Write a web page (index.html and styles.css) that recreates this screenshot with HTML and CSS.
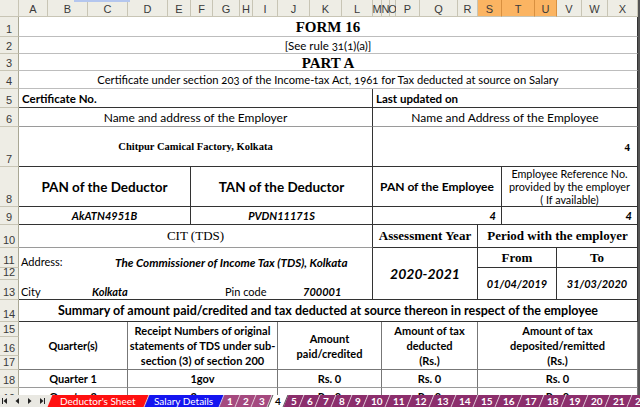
FILE: index.html
```html
<!DOCTYPE html>
<html lang="en">
<head>
    <meta charset="UTF-8">
    <title>Form 16 - Part A</title>
    <link rel="stylesheet" href="styles.css">
</head>
<body>
    <div class="sheet">
        <!-- column headers -->
        <div class="ch corner"></div>
        <div class="ch">A</div><div class="ch">B</div><div class="ch">C</div><div class="ch">D</div>
        <div class="ch">E</div><div class="ch">F</div><div class="ch">G</div><div class="ch">H</div>
        <div class="ch">I</div><div class="ch">J</div><div class="ch">K</div><div class="ch">L</div>
        <div class="ch">M</div><div class="ch">N</div><div class="ch">O</div><div class="ch">P</div>
        <div class="ch">Q</div><div class="ch">R</div><div class="ch sel">S</div><div class="ch sel">T</div>
        <div class="ch sel">U</div><div class="ch">V</div><div class="ch">W</div><div class="ch">X</div>

        <!-- row headers -->
        <div class="rh">1</div><div class="rh">2</div><div class="rh">3</div><div class="rh">4</div>
        <div class="rh">5</div><div class="rh">6</div><div class="rh">7</div><div class="rh">8</div>
        <div class="rh">9</div><div class="rh">10</div><div class="rh">11</div><div class="rh">12</div>
        <div class="rh">13</div><div class="rh">14</div><div class="rh">15</div><div class="rh">16</div>
        <div class="rh">17</div><div class="rh">18</div><div class="rh">19</div>

        <!-- title block -->
        <div class="cell light full r1 serif title">FORM 16</div>
        <div class="cell light full r2 rule">[See rule 31(1)(a)]</div>
        <div class="cell light full r3 serif title">PART A</div>
        <div class="cell light full r4 cert">Certificate under section 203 of the Income-tax Act, 1961 for Tax deducted at source on Salary</div>

        <div class="cell left-half r5 left label">Certificate No.</div>
        <div class="cell right-half r5 left label">Last updated on</div>

        <div class="cell light-b left-half r6 head">Name and address of the Employer</div>
        <div class="cell light-b right-half r6 head">Name and Address of the Employee</div>

        <div class="cell left-half r7 serif employer">Chitpur Camical Factory, Kolkata</div>
        <div class="cell right-half r7 serif num-right">4</div>

        <div class="cell c-ae r8 big">PAN of the Deductor</div>
        <div class="cell c-fl r8 big">TAN of the Deductor</div>
        <div class="cell c-ms r8 mid">PAN of the Employee</div>
        <div class="cell c-tx r8 small">Employee Reference No.<br>provided by the employer<br>( If available)</div>

        <div class="cell c-ae r9 value">AkATN4951B</div>
        <div class="cell c-fl r9 value">PVDN11171S</div>
        <div class="cell c-ms r9 value end">4</div>
        <div class="cell c-tx r9 value end">4</div>

        <div class="cell light-b left-half r10 serif cit">CIT (TDS)</div>
        <div class="cell c-mr r10 serif sub">Assessment Year</div>
        <div class="cell c-sx r10 serif sub">Period with the employer</div>

        <div class="cell left-half r11-13 address">
            <div class="addr-line">
                <span class="addr-label">Address:</span>
                <span class="addr-value commissioner">The Commissioner of Income Tax (TDS), Kolkata</span>
            </div>
            <div class="addr-line second">
                <span class="city-label">City</span>
                <span class="city-value">Kolkata</span>
                <span class="pin-label">Pin code</span>
                <span class="addr-value">700001</span>
            </div>
        </div>
        <div class="cell c-mr r11-13 year">2020-2021</div>
        <div class="cell c-su r11 serif sub">From</div>
        <div class="cell c-vx r11 serif sub">To</div>
        <div class="cell c-su r12-13 date">01/04/2019</div>
        <div class="cell c-vx r12-13 date">31/03/2020</div>

        <div class="cell full r14 summary">Summary of amount paid/credited and tax deducted at source thereon in respect of the employee</div>

        <div class="cell q1 r15-17 th">Quarter(s)</div>
        <div class="cell q2 r15-17 th">Receipt Numbers of original<br>statements of TDS under sub-<br>section (3) of section 200</div>
        <div class="cell q3 r15-17 th">Amount<br>paid/credited</div>
        <div class="cell q4 r15-17 th">Amount of tax<br>deducted<br>(Rs.)</div>
        <div class="cell q5 r15-17 th">Amount of tax<br>deposited/remitted<br>(Rs.)</div>

        <div class="cell light-b q1 r18 td">Quarter 1</div>
        <div class="cell light-b q2 r18 td">1gov</div>
        <div class="cell light-b q3 r18 td">Rs. 0</div>
        <div class="cell light-b q4 r18 td">Rs. 0</div>
        <div class="cell light-b q5 r18 td">Rs. 0</div>

        <div class="cell light-b q1 r19 td">Quarter 2</div>
        <div class="cell light-b q2 r19 td">2gov</div>
        <div class="cell light-b q3 r19 td">Rs. 0</div>
        <div class="cell light-b q4 r19 td">Rs. 0</div>
        <div class="cell light-b q5 r19 td">Rs. 0</div>
    </div>

    <div class="tabbar">
        <div class="nav">
            <svg width="50" height="12" viewBox="0 0 50 12">
                <rect x="2" y="3" width="1" height="6" fill="#222"/>
                <path d="M7 3 L3.5 6 L7 9 Z" fill="#222"/>
                <path d="M19 3 L15.5 6 L19 9 Z" fill="#222"/>
                <path d="M28 3 L31.5 6 L28 9 Z" fill="#222"/>
                <path d="M40 3 L43.5 6 L40 9 Z" fill="#222"/>
                <rect x="44" y="3" width="1" height="6" fill="#222"/>
            </svg>
        </div>
        <div class="tab red"><span>Deductor's Sheet</span></div>
        <div class="tab blue"><span>Salary Details</span></div>
        <div class="tab pale"><span>1</span></div>
        <div class="tab pale"><span>2</span></div>
        <div class="tab pale"><span>3</span></div>
        <div class="tab active"><span>4</span></div>
        <div class="tab"><span>5</span></div>
        <div class="tab"><span>6</span></div>
        <div class="tab"><span>7</span></div>
        <div class="tab"><span>8</span></div>
        <div class="tab"><span>9</span></div>
        <div class="tab wide"><span>10</span></div>
        <div class="tab wide"><span>11</span></div>
        <div class="tab wide"><span>12</span></div>
        <div class="tab wide"><span>13</span></div>
        <div class="tab wide"><span>14</span></div>
        <div class="tab wide"><span>15</span></div>
        <div class="tab wide"><span>16</span></div>
        <div class="tab wide"><span>17</span></div>
        <div class="tab wide"><span>18</span></div>
        <div class="tab wide"><span>19</span></div>
        <div class="tab wide"><span>20</span></div>
        <div class="tab wide"><span>21</span></div>
        <div class="tab wide"><span>22</span></div>
    </div>
</body>
</html>
```

FILE: styles.css
```css
body {
    margin: 0;
    width: 640px;
    height: 407px;
    overflow: hidden;
    background-color: #fff;
    font-family: Lato, "Noto Sans", sans-serif;
    color: #000;
}

/* the worksheet: row header + columns A..X */
.sheet {
    position: relative;
    display: grid;
    grid-template-columns: 19px 29px 40px 40px 40px 23px 22px 27px 13px 25px 32px 32px 31px 9px 8px 6px 24px 38px 20px 24px 33px 22px 25px 26px 30px;
    grid-template-rows: 17px 20px 17px 17px 18px 19px 19px 40px 40px 18px 23px 20px 12px 20px 22px 15px 19px 14px 18px 18px;
    width: 638px;
    height: 395px;
    overflow: hidden;
    border-right: 2px solid #555;
}

/* bit of the formula bar selection peeking in at the top */
.sheet::before {
    content: "";
    position: absolute;
    left: 74px;
    top: 0;
    width: 56px;
    height: 2px;
    background-color: #b4c6ee;
}

.ch, .rh {
    background-color: #eeede5;
    border-right: 1px solid #c8c5b5;
    border-bottom: 1px solid #c8c5b5;
    font-family: "Liberation Sans", Arial, sans-serif;
    font-size: 11px;
    color: #3a3a3a;
    display: flex;
    justify-content: center;
    box-sizing: border-box;
}

.ch {
    align-items: center;
    padding-top: 2px;
}

.ch.sel {
    background-color: #fbb462;
    border-right-color: #d89040;
}

.rh {
    grid-column: 1;
    align-items: flex-end;
    padding-bottom: 1px;
    border-right-color: #a9a794;
}

.cell {
    display: flex;
    align-items: center;
    justify-content: center;
    text-align: center;
    white-space: nowrap;
    box-sizing: border-box;
    border-right: 1px solid #333;
    border-bottom: 1px solid #333;
}

.cell.light {
    border-bottom-color: #bdbdbd;
}

.cell.light-b {
    border-bottom-color: #9a9a9a;
}

/* columns */
.full { grid-column: 2 / 26; }
.left-half { grid-column: 2 / 14; }
.right-half { grid-column: 14 / 26; }
.c-ae { grid-column: 2 / 7; }
.c-fl { grid-column: 7 / 14; }
.c-ms { grid-column: 14 / 21; }
.c-tx { grid-column: 21 / 26; }
.c-mr { grid-column: 14 / 20; }
.c-sx { grid-column: 20 / 26; }
.c-su { grid-column: 20 / 23; }
.c-vx { grid-column: 23 / 26; }
.q1 { grid-column: 2 / 5; }
.q2 { grid-column: 5 / 11; }
.q3 { grid-column: 11 / 15; }
.q4 { grid-column: 15 / 20; }
.q5 { grid-column: 20 / 26; }

/* rows (sheet row n sits on grid row n + 1) */
.r1 { grid-row: 2; }
.r2 { grid-row: 3; }
.r3 { grid-row: 4; }
.r4 { grid-row: 5; }
.r5 { grid-row: 6; }
.r6 { grid-row: 7; }
.r7 { grid-row: 8; }
.r8 { grid-row: 9; }
.r9 { grid-row: 10; }
.r10 { grid-row: 11; }
.r11 { grid-row: 12; }
.r11-13 { grid-row: 12 / 15; }
.r12-13 { grid-row: 13 / 15; }
.r14 { grid-row: 15; }
.r15-17 { grid-row: 16 / 19; }
.r18 { grid-row: 19; }
.r19 { grid-row: 20; }

.serif {
    font-family: "Liberation Serif", "Times New Roman", serif;
}

.title {
    font-size: 15px;
    font-weight: bold;
    padding-top: 2px;
}

.rule {
    font-size: 11.5px;
    font-variant-numeric: oldstyle-nums;
}

.cert {
    font-size: 11.2px;
    font-variant-numeric: oldstyle-nums;
}

.left {
    justify-content: flex-start;
    padding-left: 3px;
}

.label {
    font-size: 11.5px;
    font-weight: bold;
}

.head {
    font-size: 12px;
}

.employer {
    font-size: 10.5px;
    font-weight: bold;
}

.num-right {
    justify-content: flex-end;
    padding-right: 7px;
    font-size: 11px;
    font-weight: bold;
}

.big {
    font-size: 13.5px;
    font-weight: bold;
}

.mid {
    font-size: 12px;
    font-weight: bold;
}

.small {
    font-size: 10.8px;
    line-height: 13px;
}

.value {
    font-size: 11px;
    font-weight: bold;
    font-style: italic;
}

.value.end {
    justify-content: flex-end;
    padding-right: 5px;
}

.cit {
    font-size: 13px;
}

.sub {
    font-size: 13px;
    font-weight: bold;
}

.address {
    flex-direction: column;
    align-items: stretch;
    justify-content: flex-start;
    padding: 6px 0 0 2px;
    font-size: 11px;
    text-align: left;
}

.addr-line {
    display: flex;
    height: 16px;
    align-items: center;
}

.addr-line.second {
    margin-top: 14px;
}

.addr-label {
    width: 94px;
}

.city-label {
    width: 71px;
}

.city-value {
    width: 133px;
    font-weight: bold;
    font-style: italic;
}

.pin-label {
    width: 78px;
}

.addr-value {
    font-weight: bold;
    font-style: italic;
}

.commissioner {
    font-size: 11.7px;
}

.year {
    font-size: 14px;
    font-weight: bold;
    font-style: italic;
}

.date {
    font-size: 11px;
    font-weight: bold;
    font-style: italic;
}

.summary {
    font-size: 12.5px;
    font-weight: bold;
}

.th {
    font-size: 11px;
    font-weight: bold;
    line-height: 15px;
    border-color: #777;
}

.td {
    font-size: 11px;
    font-weight: bold;
    border-right-color: #777;
}

/* sheet tabs */
.tabbar {
    display: flex;
    height: 12px;
    background-color: #e9e8e2;
    overflow: hidden;
}

.nav {
    width: 50px;
    flex: none;
}

.nav svg {
    display: block;
}

.tab {
    flex: none;
    display: flex;
    align-items: center;
    justify-content: center;
    width: 16px;
    height: 12px;
    box-sizing: border-box;
    background-color: #8c2e6c;
    color: #fff;
    border-right: 1px solid #e6d6e0;
    transform: skewX(-22deg);
    font-size: 10px;
    font-weight: bold;
}

.tab.wide {
    width: 22px;
}

.tab span {
    transform: skewX(22deg);
    line-height: 12px;
}

.tab.red {
    width: 97px;
    background-color: #ff1010;
    font-weight: normal;
}

.tab.blue {
    width: 75px;
    background-color: #1414f0;
    font-weight: normal;
}

.tab.pale {
    background-color: #a5497f;
}

.tab.active {
    background-color: #fff;
    color: #000;
    border-left: 1px solid #555;
    border-right-color: #555;
}
```
